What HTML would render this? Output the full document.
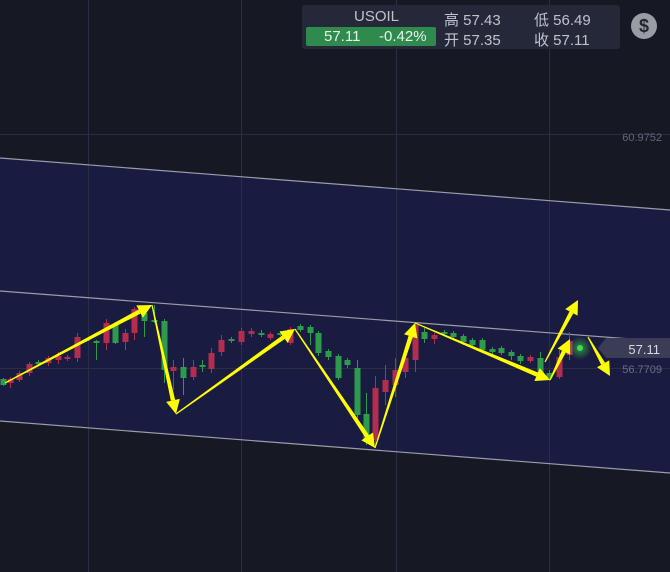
<!DOCTYPE html>
<html><head><meta charset="utf-8"><style>
html,body{margin:0;padding:0;width:670px;height:572px;overflow:hidden;background:#161923;font-family:"Liberation Sans","Noto Sans CJK SC",sans-serif}
#hdr{position:absolute;left:302px;top:5px;width:318px;height:44px;background:#242838;border-radius:3px}
.t{position:absolute;font-size:15px;color:#c0c2cb;white-space:nowrap}
#gb{position:absolute;left:306px;top:27px;width:130px;height:19px;background:#2f8a4e;border-radius:2px}
#coin{position:absolute;left:631px;top:13px;width:26px;height:26px;border-radius:50%;background:#9a9ca4;color:#23262f;font-weight:bold;font-size:18px;text-align:center;line-height:26px}
</style></head><body>
<svg id="s" width="670" height="572" style="position:absolute;left:0;top:0">
<defs><radialGradient id="gl"><stop offset="0" stop-color="#3ee04a" stop-opacity="0.6"/><stop offset="1" stop-color="#3ee04a" stop-opacity="0"/></radialGradient></defs>
<polygon points="0,158 670,210 670,473 0,421" fill="#1a1b40"/>
<g stroke="#2a2e44" stroke-width="1">
<line x1="88.5" y1="0" x2="88.5" y2="572"/><line x1="241.5" y1="0" x2="241.5" y2="572"/>
<line x1="396.5" y1="0" x2="396.5" y2="572"/><line x1="549.5" y1="0" x2="549.5" y2="572"/>
<line x1="0" y1="134.5" x2="670" y2="134.5"/><line x1="0" y1="368.5" x2="670" y2="368.5"/>
</g>
<g stroke="#9a9cab" stroke-width="1.2">
<line x1="0" y1="158" x2="670" y2="210"/><line x1="0" y1="291" x2="670" y2="342"/><line x1="0" y1="421" x2="670" y2="473"/>
</g>
<g id="c"></g>
<circle cx="580" cy="348" r="12" fill="url(#gl)"/><circle cx="580" cy="348" r="3" fill="#3ee04a"/>
<g id="a"></g>
<polygon points="598,348 606,338 670,338 670,358 606,358" fill="#3a3d55"/>
<text x="660" y="354" font-size="13" fill="#d8d9e0" text-anchor="end" font-family="Liberation Sans">57.11</text>
<text x="662" y="373" font-size="11" fill="#6a6f88" text-anchor="end" font-family="Liberation Sans">56.7709</text>
<text x="662" y="141" font-size="11" fill="#62667a" text-anchor="end" font-family="Liberation Sans">60.9752</text>
</svg>
<div id="hdr"></div>
<div class="t" style="left:354px;top:8px">USOIL</div>
<div id="gb"></div>
<div class="t" style="left:324px;top:28px;color:#e8f3ea">57.11</div>
<div class="t" style="left:379px;top:28px;color:#e8f3ea">-0.42%</div>
<div class="t" style="left:444px;top:9px">高 57.43</div>
<div class="t" style="left:444px;top:29px">开 57.35</div>
<div class="t" style="left:534px;top:9px">低 56.49</div>
<div class="t" style="left:534px;top:29px">收 57.11</div>
<div id="coin">$</div>
<script>
var C=[[3,'g',379,385,378,386],[10,'r',379,383,377,388],[19,'r',373,380,371,382],[29,'r',364,373,362,376],[38,'g',362,364,360,366],[48,'r',358,363,356,366],[58,'r',356,360,352,364],[67,'r',357,359,355,361],[77,'r',337,358,333,362],[86,'g',339,341,338,342],[96,'g',341,342,340,360],[106,'r',323,343,319,350],[115,'g',325,343,322,344],[125,'r',333,342,329,350],[134,'r',309,333,307,340],[144,'g',313,321,306,337],[154,'g',320,321,305,323],[164,'g',321,370,319,383],[173,'r',367,371,360,390],[183,'g',367,378,358,395],[193,'r',367,377,360,380],[202,'g',365,366,360,372],[211,'r',353,369,348,373],[221,'r',340,352,335,356],[231,'g',339,341,337,343],[241,'r',331,342,328,345],[251,'r',331,334,328,337],[261,'g',333,335,330,337],[270,'r',334,338,332,340],[280,'g',333,334,331,336],[290,'r',329,343,327,345],[300,'g',326,330,324,332],[310,'g',327,333,325,345],[318,'g',333,353,331,356],[328,'g',351,357,349,360],[338,'g',356,378,354,380],[347,'g',360,365,358,368],[357,'g',368,415,360,420],[366,'g',414,440,393,445],[375,'r',388,440,376,448],[385,'r',380,392,365,405],[395,'r',370,385,358,397],[405,'r',358,372,355,378],[415,'r',325,360,323,372],[424,'g',332,339,328,343],[434,'r',335,339,333,344],[444,'g',332,334,330,336],[453,'g',333,337,331,340],[463,'g',336,342,334,345],[472,'g',340,345,338,348],[482,'g',340,350,338,352],[492,'g',349,352,347,354],[501,'g',348,353,346,355],[511,'g',352,356,350,360],[520,'g',356,361,354,364],[530,'r',357,361,355,363],[540,'g',358,377,352,380],[549,'g',373,378,370,381],[559,'r',357,377,350,379],[569,'r',341,355,332,360]];
var h='';C.forEach(function(c){var col=c[1]=='g'?'#2e9a4c':'#b32d4e';h+='<line x1="'+(c[0]+0.5)+'" y1="'+c[4]+'" x2="'+(c[0]+0.5)+'" y2="'+c[5]+'" stroke="'+col+'"/><rect x="'+(c[0]-2.5)+'" y="'+c[2]+'" width="6" height="'+Math.max(2,c[3]-c[2])+'" fill="'+col+'"/>';});
document.getElementById('c').innerHTML=h;
var A=[[5,383,152,305],[152,305,176,414],[176,414,295,329],[295,329,375,448],[375,448,415,323],[415,323,550,380],[550,380,570,339],[545,362,578,300],[588,337,610,376]];
var g='';A.forEach(function(a){var dx=a[2]-a[0],dy=a[3]-a[1],L=Math.sqrt(dx*dx+dy*dy),ux=dx/L,uy=dy/L,px=-uy,py=ux,hl=14,hw=7,s=0.6,e=2.2;var bx=a[2]-ux*hl,by=a[3]-uy*hl;
g+='<polygon points="'+(a[0]+px*s)+','+(a[1]+py*s)+' '+(bx+px*e)+','+(by+py*e)+' '+(bx-px*e)+','+(by-py*e)+' '+(a[0]-px*s)+','+(a[1]-py*s)+'" fill="#ffff00"/>';
g+='<polygon points="'+a[2]+','+a[3]+' '+(bx+px*hw)+','+(by+py*hw)+' '+(bx-px*hw)+','+(by-py*hw)+'" fill="#ffff00"/>';});
document.getElementById('a').innerHTML=g;
</script>
</body></html>
